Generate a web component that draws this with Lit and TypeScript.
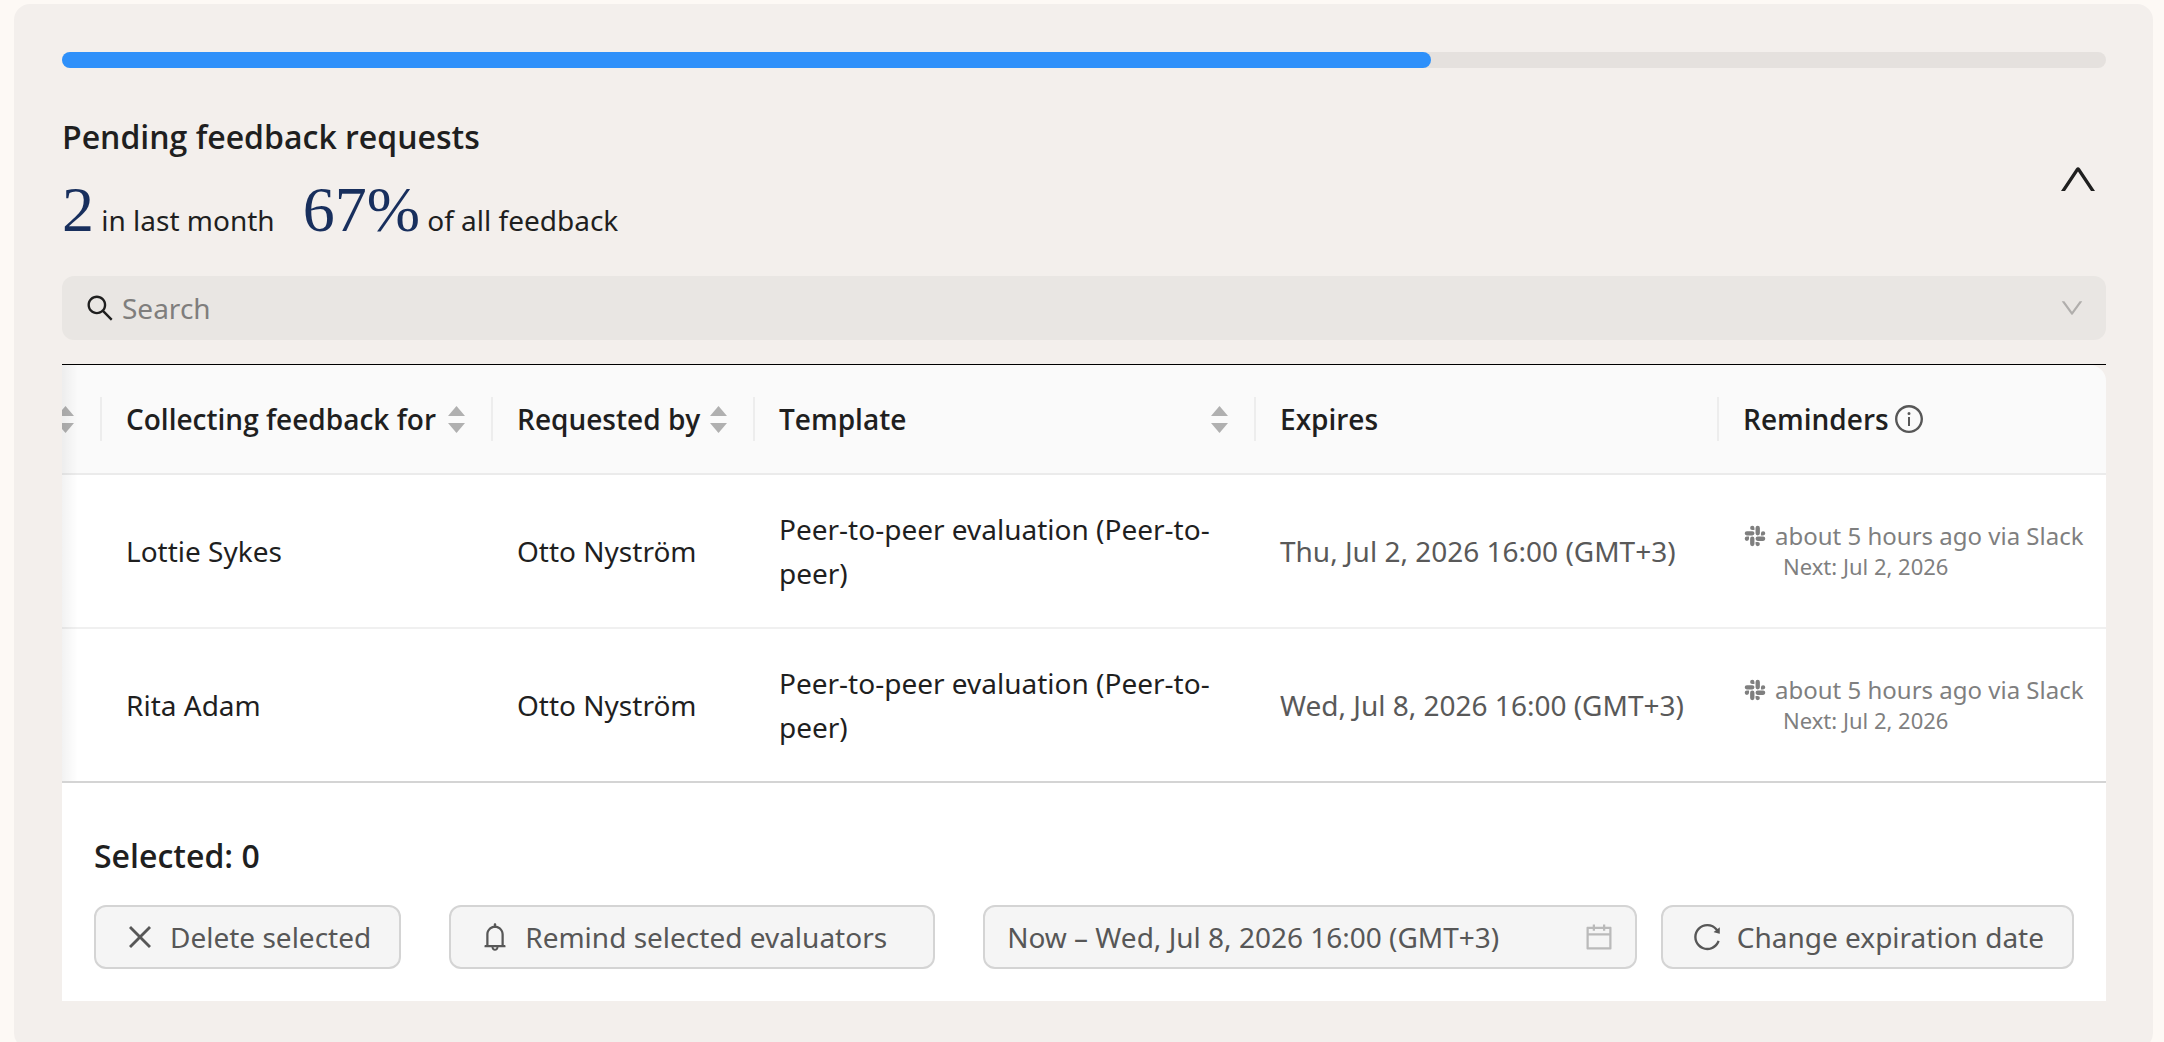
import { LitElement, html, css, svg, nothing } from "lit";
import { customElement, property, state } from "lit/decorators.js";

interface FeedbackRequest {
  target: string;
  requester: string;
  template: string;
  expires: string;
  lastReminder: string;
  nextReminder: string;
}

interface Column {
  label: string;
  size: string;
  sortable?: boolean;
  info?: boolean;
}

const OUTLINED = "64 64 896 896";

const ICONS: Record<string, { box: string; paths: string[] }> = {
  search: {
    box: OUTLINED,
    paths: [
      "M909.6 854.5L649.9 594.8C690.2 542.7 712 479 712 412c0-80.2-31.3-155.4-87.9-212.1-56.6-56.7-132-87.9-212.1-87.9s-155.5 31.3-212.1 87.9C143.2 256.5 112 331.8 112 412c0 80.1 31.3 155.5 87.9 212.1C256.5 680.8 331.8 712 412 712c67 0 130.6-21.8 182.7-62l259.7 259.6a8.2 8.2 0 0011.6 0l43.6-43.5a8.2 8.2 0 000-11.6zM570.4 570.4C528 612.7 471.8 636 412 636s-116-23.3-158.4-65.6C211.3 528 188 471.8 188 412s23.3-116.1 65.6-158.4C296 211.3 352.2 188 412 188s116.1 23.2 158.4 65.6S636 352.2 636 412s-23.3 116.1-65.6 158.4z",
    ],
  },
  down: {
    box: OUTLINED,
    paths: [
      "M884 256h-75c-5.1 0-9.9 2.5-12.9 6.6L512 654.2 227.9 262.6c-3-4.1-7.8-6.6-12.9-6.6h-75c-6.5 0-10.3 7.4-6.5 12.7l352.6 486.1c12.8 17.6 39 17.6 51.7 0l352.6-486.1c3.9-5.3.1-12.7-6.4-12.7z",
    ],
  },
  up: { box: "0 0 34 24", paths: ["M0 24L15 1.5Q17 -1 19 1.5L34 24H30L17 4.5L4 24Z"] },
  info: {
    box: OUTLINED,
    paths: [
      "M512 64C264.6 64 64 264.6 64 512s200.6 448 448 448 448-200.6 448-448S759.4 64 512 64zm0 820c-205.4 0-372-166.6-372-372s166.6-372 372-372 372 166.6 372 372-166.6 372-372 372z",
      "M464 336a48 48 0 1096 0 48 48 0 10-96 0zm72 112h-48c-4.4 0-8 3.6-8 8v272c0 4.4 3.6 8 8 8h48c4.4 0 8-3.6 8-8V456c0-4.4-3.6-8-8-8z",
    ],
  },
  close: {
    box: "0 0 28 28",
    paths: ["M5 3L14 12L23 3L25 5L16 14L25 23L23 25L14 16L5 25L3 23L12 14L3 5Z"],
  },
  bell: {
    box: OUTLINED,
    paths: [
      "M816 768h-24V428c0-141.1-104.3-257.7-240-277.1V112c0-22.1-17.9-40-40-40s-40 17.9-40 40v38.9c-135.7 19.4-240 136-240 277.1v340h-24c-17.7 0-32 14.3-32 32v32c0 4.4 3.6 8 8 8h216c0 61.8 50.2 112 112 112s112-50.2 112-112h216c4.4 0 8-3.6 8-8v-32c0-17.7-14.3-32-32-32zM512 888c-26.5 0-48-21.5-48-48h96c0 26.5-21.5 48-48 48zM304 768V428c0-55.6 21.6-107.8 60.9-147.1S456.4 220 512 220c55.6 0 107.8 21.6 147.1 60.9S720 372.4 720 428v340H304z",
    ],
  },
  calendar: {
    box: OUTLINED,
    paths: [
      "M880 184H712v-64c0-4.4-3.6-8-8-8h-56c-4.4 0-8 3.6-8 8v64H384v-64c0-4.4-3.6-8-8-8h-56c-4.4 0-8 3.6-8 8v64H144c-17.7 0-32 14.3-32 32v664c0 17.7 14.3 32 32 32h736c17.7 0 32-14.3 32-32V216c0-17.7-14.3-32-32-32zm-40 656H184V460h656v380zM184 392V256h128v48c0 4.4 3.6 8 8 8h56c4.4 0 8-3.6 8-8v-48h256v48c0 4.4 3.6 8 8 8h56c4.4 0 8-3.6 8-8v-48h128v136H184z",
    ],
  },
  reload: {
    box: OUTLINED,
    paths: [
      "M909.1 209.3l-56.4 44.1C775.8 155.1 656.2 92 521.9 92 290 92 102.3 279.5 102 511.5 101.7 743.7 289.8 932 521.9 932c181.3 0 335.8-115 394.6-276.1 1.5-4.2-.7-8.9-4.9-10.3l-56.7-19.5a8 8 0 00-10.1 4.8c-1.8 5-3.8 10-5.9 14.9-17.3 41-42.1 77.8-73.7 109.4A344.77 344.77 0 01655.9 829c-42.3 17.9-87.4 27-133.8 27-46.5 0-91.5-9.1-133.8-27A341.5 341.5 0 01279 755.2a342.16 342.16 0 01-73.7-109.4c-17.9-42.4-27-87.4-27-133.9s9.1-91.5 27-133.9c17.3-41 42.1-77.8 73.7-109.4 31.6-31.6 68.4-56.4 109.3-73.8 42.3-17.9 87.4-27 133.8-27 46.5 0 91.5 9.1 133.8 27a341.5 341.5 0 01109.3 73.8c9.9 9.9 19.2 20.4 27.8 31.4l-60.2 47a8 8 0 003 14.1l175.6 43c5 1.2 9.9-2.6 9.9-7.7l.8-180.9c-.1-6.6-7.8-10.3-13-6.2z",
    ],
  },
  slack: {
    box: "-2 -2 28 28",
    paths: [
      "M5.042 15.165a2.528 2.528 0 0 1-2.52 2.523A2.528 2.528 0 0 1 0 15.165a2.527 2.527 0 0 1 2.522-2.52h2.52v2.52zM6.313 15.165a2.527 2.527 0 0 1 2.521-2.52 2.527 2.527 0 0 1 2.521 2.52v6.313A2.528 2.528 0 0 1 8.834 24a2.528 2.528 0 0 1-2.521-2.522v-6.313z",
      "M8.834 5.042a2.528 2.528 0 0 1-2.521-2.52A2.528 2.528 0 0 1 8.834 0a2.528 2.528 0 0 1 2.521 2.522v2.52H8.834zM8.834 6.313a2.528 2.528 0 0 1 2.521 2.521 2.528 2.528 0 0 1-2.521 2.521H2.522A2.528 2.528 0 0 1 0 8.834a2.528 2.528 0 0 1 2.522-2.521h6.312z",
      "M18.956 8.834a2.528 2.528 0 0 1 2.522-2.521A2.528 2.528 0 0 1 24 8.834a2.528 2.528 0 0 1-2.522 2.521h-2.522V8.834zM17.688 8.834a2.528 2.528 0 0 1-2.523 2.521 2.527 2.527 0 0 1-2.52-2.521V2.522A2.527 2.527 0 0 1 15.165 0a2.528 2.528 0 0 1 2.523 2.522v6.312z",
      "M15.165 18.956a2.528 2.528 0 0 1 2.523 2.522A2.528 2.528 0 0 1 15.165 24a2.527 2.527 0 0 1-2.52-2.522v-2.522h2.52zM15.165 17.688a2.527 2.527 0 0 1-2.52-2.523 2.526 2.526 0 0 1 2.52-2.52h6.313A2.527 2.527 0 0 1 24 15.165a2.528 2.528 0 0 1-2.522 2.523h-6.313z",
    ],
  },
  sort: {
    box: "0 0 17 27",
    paths: ["M8.5 0L17 10H0Z", "M0 17H17L8.5 27Z"],
  },
};

@customElement("ui-icon")
export class UiIcon extends LitElement {
  @property() name = "";

  static styles = css`
    :host {
      display: block;
      flex: none;
      width: 28px;
      height: 28px;
    }
    .glyph {
      display: block;
      width: 100%;
      height: 100%;
      fill: currentColor;
    }
  `;

  render() {
    const icon = ICONS[this.name];
    if (!icon) return nothing;
    return html`<svg class="glyph" viewBox=${icon.box} aria-hidden="true">
      ${icon.paths.map((d) => svg`<path d=${d}></path>`)}
    </svg>`;
  }
}

const COLUMNS: Column[] = [
  { label: "", size: "col-clipped", sortable: true },
  { label: "Collecting feedback for", size: "col-target", sortable: true },
  { label: "Requested by", size: "col-requester", sortable: true },
  { label: "Template", size: "col-template", sortable: true },
  { label: "Expires", size: "col-expires" },
  { label: "Reminders", size: "col-reminders", info: true },
];

const REQUESTS: FeedbackRequest[] = [
  {
    target: "Lottie Sykes",
    requester: "Otto Nyström",
    template: "Peer-to-peer evaluation (Peer-to-peer)",
    expires: "Thu, Jul 2, 2026 16:00 (GMT+3)",
    lastReminder: "about 5 hours ago via Slack",
    nextReminder: "Next: Jul 2, 2026",
  },
  {
    target: "Rita Adam",
    requester: "Otto Nyström",
    template: "Peer-to-peer evaluation (Peer-to-peer)",
    expires: "Wed, Jul 8, 2026 16:00 (GMT+3)",
    lastReminder: "about 5 hours ago via Slack",
    nextReminder: "Next: Jul 2, 2026",
  },
];

@customElement("app-root")
export class AppRoot extends LitElement {
  @property({ type: Number }) progress = 67;
  @state() private expanded = true;

  static styles = css`
    :host {
      display: block;
      box-sizing: border-box;
      height: 100vh;
      overflow: hidden;
      padding: 4px 11px 0 14px;
      background: #fdf9f5;
      color: #1f1f1f;
      font-family: "Noto Sans", "Open Sans", sans-serif;
      font-size: 28px;
      line-height: 44px;
    }
    * {
      box-sizing: border-box;
    }
    .card {
      padding: 48px 47px 48px 48px;
      border-radius: 16px;
      background: #f3efec;
    }
    .progress {
      height: 16px;
      border-radius: 8px;
      background: #e5e1de;
    }
    .progress-fill {
      height: 100%;
      border-radius: 8px;
      background: #2e90fa;
    }
    .summary {
      display: flex;
      align-items: center;
      justify-content: space-between;
      margin: 44px 0 30px;
    }
    .title,
    .selected {
      margin: 0;
      font-family: "Open Sans", "Noto Sans", sans-serif;
      font-size: 32px;
      font-weight: 600;
      line-height: 50px;
    }
    .stats {
      display: flex;
      gap: 28px;
      margin: 12px 0 0;
    }
    .figure {
      color: #182f5d;
      font-family: "Liberation Serif", serif;
      font-size: 64px;
      line-height: 72px;
    }
    .toggle {
      display: grid;
      place-items: center;
      padding: 0 11px;
      border: 0;
      background: none;
      color: inherit;
    }
    .icon-up {
      width: 34px;
      height: 24px;
    }
    .search {
      display: flex;
      align-items: center;
      gap: 8px;
      height: 64px;
      padding: 0 22px 0 24px;
      border-radius: 12px;
      background: #e9e6e3;
    }
    .search-input,
    .date-input {
      flex: 1;
      min-width: 0;
      padding: 0;
      border: 0;
      outline: 0;
      background: none;
      color: inherit;
      font: inherit;
    }
    .search-input::placeholder {
      color: #7f7e7d;
      opacity: 1;
    }
    .icon-down {
      width: 24px;
      height: 24px;
      color: #b0aeac;
    }
    .table-wrap {
      position: relative;
      margin-top: 24px;
      border-top: 1px solid #000;
    }
    .table-wrap::before {
      content: "";
      position: absolute;
      inset: 0 auto 0 0;
      width: 16px;
      background: linear-gradient(90deg, rgba(0, 0, 0, 0.05), rgba(0, 0, 0, 0));
    }
    .table {
      width: 100%;
      border-collapse: separate;
      border-spacing: 0;
      table-layout: fixed;
    }
    .col-clipped {
      width: 40px;
    }
    .col-target {
      width: 391px;
    }
    .col-requester {
      width: 262px;
    }
    .col-expires {
      width: 463px;
    }
    .col-reminders {
      width: 387px;
    }
    .head {
      padding: 32px 0;
      border-bottom: 2px solid #ebebeb;
      background: #fafafa;
      font-family: "Open Sans", "Noto Sans", sans-serif;
      font-weight: 600;
      text-align: left;
    }
    .head:last-child {
      border-top-right-radius: 16px;
    }
    .head-inner {
      display: flex;
      align-items: center;
      height: 44px;
      padding: 0 26px 0 24px;
      border-right: 2px solid #ededed;
      white-space: nowrap;
    }
    .head:first-child .head-inner {
      justify-content: flex-end;
      padding-left: 0;
      overflow: hidden;
    }
    .head:last-child .head-inner {
      gap: 6px;
      border-right: 0;
    }
    .sort {
      flex: none;
      display: block;
      margin-left: auto;
      padding: 0;
      border: 0;
      background: none;
      color: #b0b0b0;
    }
    .icon-sort {
      width: 17px;
      height: 27px;
    }
    .icon-info {
      color: #575757;
    }
    .cell {
      padding: 32px 24px;
      border-bottom: 2px solid #f0f0f0;
      background: #fff;
    }
    .row:last-child .cell {
      border-bottom: 0;
    }
    .muted {
      color: #595959;
      white-space: nowrap;
    }
    .reminder {
      color: #7f7f7f;
      white-space: nowrap;
      line-height: 30px;
    }
    .reminder-last {
      display: flex;
      align-items: center;
      gap: 8px;
      font-size: 24px;
    }
    .reminder-next {
      padding-left: 40px;
      font-size: 22px;
    }
    .icon-slack {
      width: 24px;
      height: 24px;
    }
    .footer {
      padding: 48px 32px 32px;
      border-top: 2px solid #d4d4d4;
      background: #fff;
    }
    .actions {
      display: flex;
      margin-top: 24px;
      color: #575757;
    }
    .action {
      flex: none;
      display: flex;
      align-items: center;
      gap: 16px;
      height: 64px;
      padding: 0 28px 0 30px;
      border: 2px solid #d4d4d4;
      border-radius: 12px;
      background: #f5f5f5;
      color: inherit;
      font: inherit;
      white-space: nowrap;
    }
    .action-delete {
      margin-right: 48px;
    }
    .action-remind {
      margin-right: 48px;
      padding-right: 46px;
    }
    .action-date {
      flex: 1;
      min-width: 0;
      margin-right: 24px;
      padding: 0 22px;
    }
    .icon-calendar {
      color: #bababa;
    }
  `;

  private toggle() {
    this.expanded = !this.expanded;
  }

  private renderHead(col: Column) {
    return html`<th class="head ${col.size}" scope="col">
      <div class="head-inner">
        ${col.label ? html`<span>${col.label}</span>` : nothing}
        ${col.sortable
          ? html`<button class="sort" type="button" aria-label="Sort">
              <ui-icon class="icon-sort" name="sort"></ui-icon>
            </button>`
          : nothing}
        ${col.info ? html`<ui-icon class="icon-info" name="info"></ui-icon>` : nothing}
      </div>
    </th>`;
  }

  private renderRow(r: FeedbackRequest) {
    return html`<tr class="row">
      <td class="cell"></td>
      <td class="cell">${r.target}</td>
      <td class="cell">${r.requester}</td>
      <td class="cell">${r.template}</td>
      <td class="cell muted">${r.expires}</td>
      <td class="cell reminder">
        <div class="reminder-last">
          <ui-icon class="icon-slack" name="slack"></ui-icon>
          <span>${r.lastReminder}</span>
        </div>
        <div class="reminder-next">${r.nextReminder}</div>
      </td>
    </tr>`;
  }

  private renderDetails() {
    return html`
      <label class="search">
        <ui-icon name="search"></ui-icon>
        <input class="search-input" type="text" placeholder="Search" aria-label="Search" />
        <ui-icon class="icon-down" name="down"></ui-icon>
      </label>
      <div class="table-wrap">
        <table class="table">
          <thead>
            <tr>
              ${COLUMNS.map((c) => this.renderHead(c))}
            </tr>
          </thead>
          <tbody>
            ${REQUESTS.map((r) => this.renderRow(r))}
          </tbody>
        </table>
      </div>
      <footer class="footer">
        <p class="selected">Selected: 0</p>
        <div class="actions">
          <button class="action action-delete" type="button">
            <ui-icon name="close"></ui-icon>Delete selected
          </button>
          <button class="action action-remind" type="button">
            <ui-icon name="bell"></ui-icon>Remind selected evaluators
          </button>
          <label class="action action-date">
            <input
              class="date-input"
              type="text"
              aria-label="Expiration date"
              .value=${"Now – Wed, Jul 8, 2026 16:00 (GMT+3)"}
            />
            <ui-icon class="icon-calendar" name="calendar"></ui-icon>
          </label>
          <button class="action" type="button">
            <ui-icon name="reload"></ui-icon>Change expiration date
          </button>
        </div>
      </footer>
    `;
  }

  render() {
    return html`
      <section class="card">
        <div class="progress" role="progressbar" aria-label="Progress" aria-valuenow=${this.progress}>
          <div class="progress-fill" style="width: ${this.progress}%"></div>
        </div>
        <header class="summary">
          <div>
            <h2 class="title">Pending feedback requests</h2>
            <p class="stats">
              <span><span class="figure">2</span> in last month</span>
              <span><span class="figure">67%</span> of all feedback</span>
            </p>
          </div>
          <button
            class="toggle"
            type="button"
            aria-label="Toggle details"
            aria-expanded=${this.expanded}
            @click=${this.toggle}
          >
            <ui-icon class="icon-up" name="up"></ui-icon>
          </button>
        </header>
        ${this.expanded ? this.renderDetails() : nothing}
      </section>
    `;
  }
}
